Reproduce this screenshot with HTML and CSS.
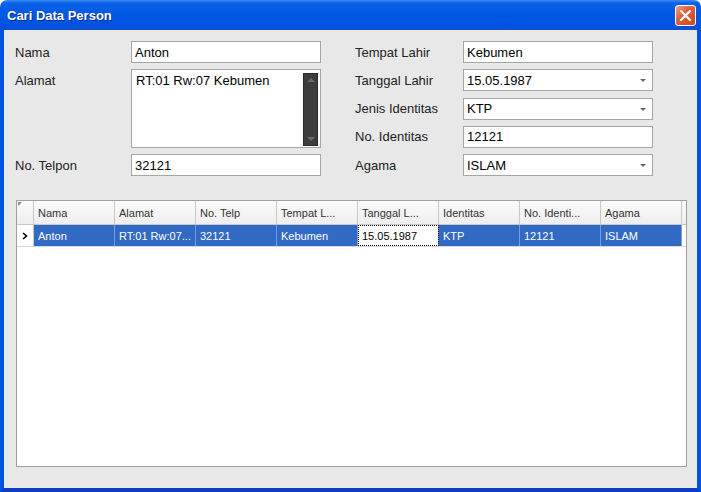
FILE: index.html
```html
<!DOCTYPE html>
<html lang="id">
<head>
    <meta charset="UTF-8">
    <title>Cari Data Person</title>
    <link rel="stylesheet" href="styles.css">
</head>
<body>
<div class="window">
    <div class="titlebar">
        <span class="title">Cari Data Person</span>
        <button class="close" aria-label="Tutup">
            <svg width="13" height="13" viewBox="0 0 13 13"><path d="M2 2 L11 11 M11 2 L2 11" stroke="#fff" stroke-width="2.2" stroke-linecap="round"/></svg>
        </button>
    </div>
    <div class="content">
        <div class="form">
            <label class="lbl r1 c1">Nama</label>
            <div class="field r1 c2">Anton</div>

            <label class="lbl r2 c1">Alamat</label>
            <div class="memo c2">
                <span>RT:01 Rw:07 Kebumen</span>
                <div class="vscroll">
                    <span class="up"></span>
                    <span class="down"></span>
                </div>
            </div>

            <label class="lbl r5 c1">No. Telpon</label>
            <div class="field r5 c2">32121</div>

            <label class="lbl r1 c4">Tempat Lahir</label>
            <div class="field r1 c5">Kebumen</div>

            <label class="lbl r2 c4">Tanggal Lahir</label>
            <div class="field combo r2 c5">15.05.1987<span class="arrow"></span></div>

            <label class="lbl r3 c4">Jenis Identitas</label>
            <div class="field combo r3 c5">KTP<span class="arrow"></span></div>

            <label class="lbl r4 c4">No. Identitas</label>
            <div class="field r4 c5">12121</div>

            <label class="lbl r5 c4">Agama</label>
            <div class="field combo r5 c5">ISLAM<span class="arrow"></span></div>
        </div>

        <div class="grid">
            <div class="grid-row head">
                <div class="ind corner"></div>
                <div class="cell">Nama</div>
                <div class="cell">Alamat</div>
                <div class="cell">No. Telp</div>
                <div class="cell">Tempat L...</div>
                <div class="cell">Tanggal L...</div>
                <div class="cell">Identitas</div>
                <div class="cell">No. Identi...</div>
                <div class="cell">Agama</div>
            </div>
            <div class="grid-row data selected">
                <div class="ind">
                    <svg width="6" height="8" viewBox="0 0 6 8"><path d="M1 1 L4.5 4 L1 7" fill="none" stroke="#000" stroke-width="1.6"/></svg>
                </div>
                <div class="cell">Anton</div>
                <div class="cell">RT:01 Rw:07...</div>
                <div class="cell">32121</div>
                <div class="cell">Kebumen</div>
                <div class="cell focus">15.05.1987</div>
                <div class="cell">KTP</div>
                <div class="cell">12121</div>
                <div class="cell">ISLAM</div>
            </div>
        </div>
    </div>
</div>
</body>
</html>
```

FILE: styles.css
```css
body {
    margin: 0;
    background: #ffffff;
    font-family: "Liberation Sans", Arial, sans-serif;
}
.window {
    width: 701px;
    height: 492px;
    display: flex;
    flex-direction: column;
}
.titlebar {
    height: 30px;
    box-sizing: border-box;
    display: flex;
    align-items: center;
    justify-content: space-between;
    padding: 0 5px 0 7px;
    border-radius: 7px 7px 0 0;
    background: linear-gradient(to bottom, #3b8cf6 0%, #0c62e6 10%, #0058e5 45%, #0053e0 80%, #0a4fd4 100%);
}
.title {
    color: #fff;
    font-weight: bold;
    font-size: 13px;
    text-shadow: 1px 1px 0 #0a2a88;
}
.close {
    width: 21px;
    height: 21px;
    padding: 0;
    border: 1px solid #fff;
    border-radius: 3px;
    background: linear-gradient(135deg, #f0a183 0%, #e3603a 40%, #cf4420 100%);
    display: flex;
    align-items: center;
    justify-content: center;
}
.content {
    flex: 1;
    background: #e8e8e8;
    border: 4px solid #0053e0;
    border-top: none;
    border-bottom-color: #0a3fc0;
    padding: 11px 11px 0 11px;
    display: flex;
    flex-direction: column;
    gap: 24px;
}
.form {
    display: grid;
    grid-template-columns: 116px 190px 34px 108px 190px;
    grid-template-rows: repeat(5, 22px);
    row-gap: 6.25px;
    font-size: 13px;
    color: #000;
}
.lbl {
    display: flex;
    align-items: center;
    color: #222;
}
.r1 { grid-row: 1; }
.r2 { grid-row: 2; }
.r3 { grid-row: 3; }
.r4 { grid-row: 4; }
.r5 { grid-row: 5; }
.c1 { grid-column: 1; }
.c2 { grid-column: 2; }
.c4 { grid-column: 4; }
.c5 { grid-column: 5; }
.field {
    position: relative;
    box-sizing: border-box;
    background: #fff;
    border: 1px solid #a5a5a5;
    padding: 0 3px;
    display: flex;
    align-items: center;
}
.arrow {
    position: absolute;
    right: 6px;
    top: 9px;
    border-left: 3px solid transparent;
    border-right: 3px solid transparent;
    border-top: 3px solid #666;
}
.memo {
    grid-row: 2 / 5;
    box-sizing: border-box;
    background: #fff;
    border: 1px solid #a5a5a5;
    display: flex;
    justify-content: space-between;
    padding: 3px 2px 1px 4px;
}
.vscroll {
    width: 15px;
    box-sizing: border-box;
    background: #3d3d3d;
    border: 1px solid #2a2a2a;
    display: flex;
    flex-direction: column;
    justify-content: space-between;
    align-items: center;
    padding: 4px 0;
}
.vscroll .up {
    border-left: 4px solid transparent;
    border-right: 4px solid transparent;
    border-bottom: 4px solid #6a6a6a;
}
.vscroll .down {
    border-left: 4px solid transparent;
    border-right: 4px solid transparent;
    border-top: 4px solid #6a6a6a;
}
.grid {
    width: 671px;
    height: 267px;
    margin-left: 1px;
    box-sizing: border-box;
    background: #fff;
    border: 1px solid #a0a0a0;
    font-size: 11px;
}
.grid-row {
    display: grid;
    grid-template-columns: 17px repeat(8, 81px);
}
.head {
    height: 23px;
    background: linear-gradient(to bottom, #fbfbfb, #eeeeee);
    border-bottom: 1px solid #c8c8c8;
    color: #333;
}
.head .cell {
    border-right: 1px solid #c8c8c8;
}
.corner {
    position: relative;
    border-right: 1px solid #c8c8c8;
}
.corner::before {
    content: "";
    position: absolute;
    left: 1px;
    top: 1px;
    border-top: 4px solid #888;
    border-right: 4px solid transparent;
}
.cell {
    display: flex;
    align-items: center;
    padding: 0 4px;
    white-space: nowrap;
    overflow: hidden;
}
.ind {
    display: flex;
    align-items: center;
    justify-content: center;
    border-right: 1px solid #c8c8c8;
}
.data {
    height: 21px;
    border-bottom: 1px solid #d8d8d8;
}
.selected .cell {
    background: #316ac5;
    color: #fff;
    border-right: 1px solid #7a9cd8;
}
.selected .cell.focus {
    background: #fff;
    color: #000;
    outline: 1px dotted #000;
    outline-offset: -1px;
}
```
